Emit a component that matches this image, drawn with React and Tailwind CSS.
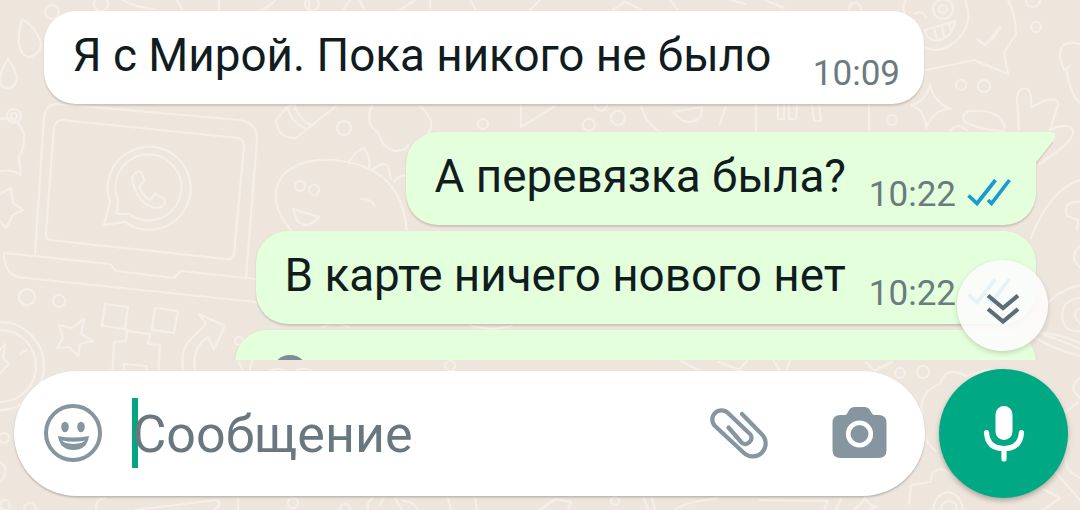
const messages = [
  {
    id: 1,
    text: "Я с Мирой. Пока никого не было",
    time: "10:09",
    className: "w-[880px] ml-[44px] mb-[28px] bg-white",
  },
  {
    id: 2,
    text: "А перевязка была?",
    time: "10:22",
    out: true,
    tail: true,
    className: "w-[630px] ml-[406px] mb-[6px] bg-[#e4ffdb]",
  },
  {
    id: 3,
    text: "В карте ничего нового нет",
    time: "10:22",
    out: true,
    className: "w-[780px] ml-[256px] mb-[6px] bg-[#e4ffdb]",
  },
];

function Wallpaper() {
  return (
    <svg
      className="absolute inset-0"
      width="1080"
      height="510"
      viewBox="0 0 1080 510"
      fill="none"
      stroke="#f6efe9"
      strokeWidth="2.2"
      strokeLinecap="round"
      strokeLinejoin="round"
    >
      {/* laptop */}
      <path d="M35 254 44 117Q46 104 58 104L240 120Q258 124 257 140L246 278" />
      <path d="M54 128Q56 120 62 120L238 138Q245 140 244 147L234 254Q233 260 226 259L50 240Q45 239 46 233Z" />
      <path d="M4 253 110 264 116 271 174 278 181 271 256 279M4 253Q4 272 17 277L256 302" />
      <path d="M104 225 110 202A41.500 41.500 0 1 1 125 222Z" />
      <path d="M117 214 118 200A33 33 0 1 1 129 214Z" />
      <path d="M132 178Q137 168 142 173L144 181 139 187Q142 195 150 200L155 194 165 199Q166 207 157 208Q137 206 132 178Z" />

      {/* drops, bell and star */}
      <path d="M22 19Q13 51 28 57Q41 55 41 43Q36 27 22 19Z" />
      <path d="M8 59Q-5 79 3 87Q15 91 17 77Q14 67 8 59Z" />
      <path d="M0 119Q18 115 24 134Q25 147 19 157L21 175Q12 169 0 171" />
      <circle cx="14" cy="116" r="7" />
      <circle cx="14" cy="116" r="3" />
      <path d="M0 194 11 188 13 203 23 210 13 215 6 228 0 221" />
      <circle cx="52" cy="12" r="7" />
      <circle cx="101" cy="4" r="7" />

      {/* circles, star, robot and arrow under the laptop */}
      <circle cx="27" cy="297" r="8" />
      <circle cx="59" cy="301" r="6" />
      <path d="M84 319 81 334 93 341 80 344 78 356 69 347 57 348 63 338 59 325 72 328Z" />
      <path d="M105 304 128 307 125 329 102 326ZM155 308 178 311 174 333 152 330Z" />
      <path d="M127 329 126 341 114 342 112 380M127 331 150 334 148 344 160 345 158 375M123 380 124 364 146 366 148 380" />
      <path d="M199 314 225 326 214 349 208 337Q190 348 196 375M199 314 206 324 188 342Q178 356 186 380" />
      <circle cx="0" cy="366" r="44" />
      <circle cx="0" cy="366" r="36" />
      <path d="M0 350 5 344 3 358 9 364 0 373M20 354 27 350" />
      <circle cx="239" cy="341" r="4" />
      <path d="M239 362 244 375M252 360 249 375" />

      {/* brush */}
      <path d="M276 120 287 107 301 101M276 120Q278 139 296 138L336 106M287 107Q293 125 307 129M294 104Q300 121 311 125" />
      <circle cx="344" cy="128" r="7" />

      {/* dinosaur */}
      <path d="M291 230Q266 201 282 176Q303 154 347 162Q406 173 407 238M348 163Q360 145 365 150Q371 156 369 169M372 170Q384 161 388 166L391 179M394 182Q402 171 410 179" />
      <circle cx="300" cy="186" r="5" />
      <circle cx="314" cy="190" r="5" />
      <path d="M293 209 319 217Q307 231 297 220ZM361 199Q372 199 374 205" />
      <path d="M372 105Q364 124 378 132Q383 150 397 151Q408 149 408 145M420 106Q438 122 427 135" />

      {/* shapes between the first two messages */}
      <circle cx="483" cy="124" r="5" />
      <path d="M521 105 521 127 555 106M641 106Q646 124 660 132M672 112 702 107Q702 125 683 121Z" />
      <circle cx="589" cy="125" r="6" />
      <circle cx="618" cy="118" r="7" />
      <circle cx="601" cy="105" r="6" />
      <path d="M756 105V131M869 105V131M778 105V119H784V105M789 105V119H796L797 105M812 105 814 121H821L819 105M720 124 725 108" />
      <circle cx="892" cy="120" r="5" />

      {/* laughing face and speech bubble */}
      <path d="M906 0Q898 13 914 26M965 0Q976 29 949 46Q936 53 925 47M915 14Q922 9 926 17M925 30 955 21Q953 38 935 41Q925 38 925 30ZM934 28 937 39M942 26 944 36M949 24 951 31" />
      <circle cx="943" cy="9" r="10" />
      <circle cx="943" cy="9" r="4" />
      <path d="M978 40 985 45 1000 27M992 40 1000 28" />
      <path d="M1008 0Q1016 16 1016 34L1004 53 1008 74 974 60 926 70" />
      <circle cx="1033" cy="0" r="7" />
      <circle cx="1036" cy="27" r="5" />
      <circle cx="961" cy="85" r="5" />
      <circle cx="984" cy="86" r="6" />
      <path d="M930 84Q933 102 951 109Q935 108 926 128Q926 111 911 105Q926 102 930 84Z" />
      <path d="M1080 44Q1058 39 1060 58L1064 70Q1068 69 1070 66M1067 71Q1070 95 1080 103" />
      <path d="M1019 129 1017 98Q1018 87 1027 89Q1032 91 1031 107L1044 101Q1059 97 1058 105L1050 130Q1071 121 1073 132Q1073 138 1063 147L1040 164M1005 128Q1002 112 980 111Q960 109 964 121Q978 130 1004 131" />
      <path d="M950 131Q956 122 967 130" />

      {/* top edge */}
      <path d="M123 0Q137 8 155 9M182 9Q179 3 177 0M219 0V10M275 0Q270 7 260 10M309 0V10M343 10 350 0M360 0 364 10M400 10 415 0M430 0V8M470 0 476 10M530 10 540 0M613 10 625 2 640 9M670 0 677 9M731 0 745 4M765 0 784 8" />
      <circle cx="312" cy="4" r="7" />
      <circle cx="855" cy="9" r="6" />

      {/* right edge */}
      <path d="M1031 238Q1050 189 1080 180M1080 202Q1062 201 1067 216L1078 220 1077 230M1080 246Q1068 258 1080 267" />
      <path d="M1048 303Q1058 291 1080 285M1080 298Q1059 300 1063 322Q1066 332 1080 331M1080 308Q1070 313 1080 323M1033 332Q1055 332 1080 343M1034 337Q1055 350 1080 356M1042 334Q1060 340 1080 349M1080 378Q1067 387 1080 398M1066 412 1078 402" />

      {/* around the composer */}
      <path d="M681 361 700 371M719 362 742 371M738 371 747 361M774 361 780 371M790 361 786 371M866 362 874 371 892 362" />
      <circle cx="900" cy="373" r="5" />
      <circle cx="923" cy="372" r="6" />
      <path d="M966 376Q946 365 940 384Q918 392 922 415Q919 438 936 451M966 376 990 369" />
      <path d="M909 504 911 485 930 482 933 472Q943 465 953 477L962 479M933 510Q935 494 948 492Q961 494 963 510" />
      <circle cx="949" cy="509" r="8" />
      <path d="M853 510Q862 505 865 497Q868 506 877 507L869 510M1035 485 1060 498 1043 510M1070 440Q1058 469 1080 478M1056 473 1080 500" />
      <circle cx="4" cy="438" r="5" />
      <path d="M0 462Q11 470 0 482" />
      <circle cx="5" cy="505" r="5" />
      <circle cx="30" cy="509" r="6" />
      <path d="M96 510Q95 499 105 498M135 510 217 500Q224 505 213 510M238 498V510M368 510Q366 502 373 498M380 504 384 498M395 498 402 510M403 501Q415 502 418 510M448 498 451 510M475 498 477 510M540 510 555 499 571 502 568 510M644 498 648 510M652 498 655 510M676 510Q677 504 718 498M760 500 828 501 824 510M836 510 841 499" />
      <circle cx="293" cy="503" r="5" />
      <circle cx="345" cy="509" r="5" />
      <circle cx="615" cy="501" r="4" />
      <circle cx="450" cy="366" r="5" />
      <path d="M270 371Q278 367 285 371M296 371Q303 366 311 371M322 327Q335 320 348 327M470 325Q495 333 512 325" />
    </svg>
  );
}

function ReadTicks() {
  return (
    <svg
      className="mt-[46px] ml-[11px]"
      width="46"
      height="30"
      viewBox="0 0 46 30"
      fill="none"
      stroke="#199bd1"
      strokeWidth="3.7"
      strokeLinejoin="miter"
    >
      <path d="M1.500 17.500 10 25.500 28.500 2M21 22 24.500 25.500 42.500 2" />
    </svg>
  );
}

function Message({ text, time, out, tail, className }) {
  return (
    <div
      className={`relative flex h-[93px] shrink-0 rounded-[32px] pl-[28.5px] leading-[90px] whitespace-nowrap shadow-[0_1.5px_2px_rgba(90,70,50,0.22)] ${className}`}
    >
      {tail && (
        <svg
          className="absolute top-0 right-[-20px]"
          width="60"
          height="36"
          viewBox="0 0 60 36"
        >
          <path d="M57 10 40 31.500" stroke="#d9d2c3" strokeWidth="2" />
          <path d="M0 0H55Q61 1 58.500 6.500Q57 9.500 40 30V34L0 32Z" fill="#e4ffdb" />
        </svg>
      )}
      <span className="text-[45.8px] text-[#101c20]">{text}</span>
      <span
        className={`relative mt-[18px] ml-auto text-[35px] text-[#6b7b80] ${
          out ? "" : "mr-[24px]"
        }`}
      >
        {time}
      </span>
      {out && (
        <div className="mr-[23px]">
          <ReadTicks />
        </div>
      )}
    </div>
  );
}

function EmojiIcon() {
  return (
    <svg width="60" height="60" viewBox="0 0 60 60" fill="#8596a0">
      <circle cx="30" cy="30" r="27" fill="none" stroke="#8596a0" strokeWidth="4" />
      <ellipse cx="22" cy="24" rx="3.800" ry="5.200" />
      <ellipse cx="38" cy="24" rx="3.800" ry="5.200" />
      <path d="M15 33Q30 36 46 33Q44 47 30.500 47Q17 47 15 33Z" />
      <path d="M19 37.500Q30 40 42 37.500Q40 40.500 30.500 41Q21 40.500 19 37.500Z" fill="white" />
    </svg>
  );
}

function ClipIcon() {
  return (
    <svg
      className="mt-[2px]"
      width="60"
      height="54"
      viewBox="0 0 60 54"
      fill="none"
      stroke="#8596a0"
      strokeWidth="4.200"
      strokeLinecap="round"
    >
      <path d="M33 7 52.500 27A12 12 0 0 1 35 46L6 19A9 9 0 0 1 19 6L41.500 27.500A6.200 6.200 0 0 1 33 36L19.500 20.500" />
    </svg>
  );
}

function CameraIcon() {
  return (
    <svg className="-mt-px" width="55" height="51" viewBox="0 0 54 51">
      <path
        d="M8 8H13Q14 8 16 4Q18 0 22 0H32Q36 0 38 4Q40 8 42 8H46Q54 8 54 16V43Q54 51 46 51H8Q0 51 0 43V16Q0 8 8 8Z"
        fill="#8596a0"
      />
      <circle cx="27" cy="27" r="11.300" fill="#8596a0" stroke="white" strokeWidth="4.600" />
    </svg>
  );
}

function MicIcon() {
  return (
    <svg width="42" height="58" viewBox="0 0 42 58" fill="none">
      <rect x="12.500" y="1" width="17" height="34" rx="8.500" fill="white" />
      <path
        d="M3.500 27.500Q4.500 43.500 21 43.500Q37.500 43.500 38.500 27.500M21 44V54"
        stroke="white"
        strokeWidth="5.200"
        strokeLinecap="round"
      />
    </svg>
  );
}

export default function App() {
  return (
    <div className="relative h-[510px] w-[1080px] overflow-hidden bg-[#eee6dd] font-['Roboto',sans-serif]">
      <Wallpaper />

      <div className="relative flex h-[360px] flex-col overflow-hidden pt-[11px]">
        {messages.map(({ id, ...message }) => (
          <Message key={id} {...message} />
        ))}
        <div className="ml-[235px] h-[93px] w-[801px] shrink-0 rounded-[32px] bg-[#e4ffdb] pt-[25px] pl-[37px] shadow-[0_1.5px_2px_rgba(90,70,50,0.22)]">
          <div className="size-[36px] rounded-full bg-[#7f8c98]" />
        </div>
      </div>

      <button
        aria-label="Вниз"
        className="absolute top-[260px] left-[957px] flex size-[91px] items-center justify-center rounded-full bg-[#fcfcfc]/90 shadow-[0_2px_5px_rgba(70,60,50,0.22)]"
      >
        <svg
          className="mt-[6px]"
          width="34"
          height="32"
          viewBox="0 0 34 32"
          fill="none"
          stroke="#5f6d76"
          strokeWidth="4.200"
        >
          <path d="M2 2.500 17 15 32 2.500M2 16 17 28.500 32 16" />
        </svg>
      </button>

      <div className="relative flex pt-[9px] pl-[14px]">
        <div className="mt-[2px] flex h-[125px] w-[911px] items-center rounded-full bg-white pr-[38px] pb-[2px] pl-[29px] shadow-[0_1.5px_2px_rgba(70,60,50,0.3)]">
          <EmojiIcon />
          <div className="ml-[29px] h-[70px] w-[6px] bg-[#07a481]" />
          <span className="mt-[5px] -ml-[5.500px] text-[52px] leading-[60px] text-[#69777f]">
            Сообщение
          </span>
          <div className="ml-auto flex items-center gap-[63px]">
            <ClipIcon />
            <CameraIcon />
          </div>
        </div>
        <button
          aria-label="Голосовое сообщение"
          className="ml-[14px] flex size-[129px] items-center justify-center rounded-full bg-[#00a884] shadow-[0_3px_5px_rgba(70,60,50,0.35)]"
        >
          <MicIcon />
        </button>
      </div>
    </div>
  );
}
